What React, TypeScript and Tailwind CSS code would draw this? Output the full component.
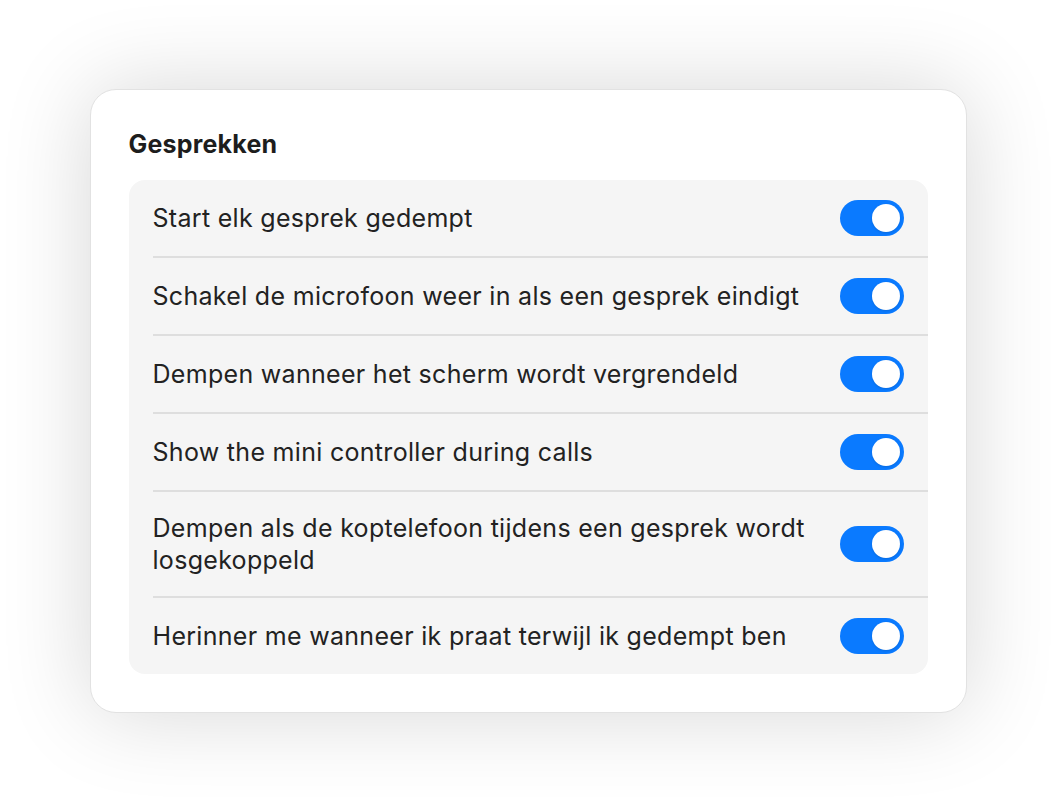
const items = [
  "Start elk gesprek gedempt",
  "Schakel de microfoon weer in als een gesprek eindigt",
  "Dempen wanneer het scherm wordt vergrendeld",
  "Show the mini controller during calls",
  "Dempen als de koptelefoon tijdens een gesprek wordt losgekoppeld",
  "Herinner me wanneer ik praat terwijl ik gedempt ben",
];

function Toggle() {
  return (
    <div className="flex h-9 w-16 shrink-0 items-center justify-end rounded-full bg-[#0a7aff] pr-1">
      <div className="h-7 w-7 rounded-full bg-white shadow-sm" />
    </div>
  );
}

export default function App() {
  return (
    <div className="flex h-[802px] w-[1056px] items-start justify-center bg-white pt-[89px] font-['Inter',sans-serif] text-[#222]">
      <div className="w-[877px] rounded-[26px] border border-[#e2e2e2] bg-white px-[38px] pb-[38px] pt-[38px] shadow-[0_0_90px_rgba(0,0,0,0.16)]">
        <h2 className="mb-[20px] text-[25px] font-bold leading-[32px] tracking-[0.2px] text-[#1d1d1d]">Gesprekken</h2>
        <div className="rounded-[16px] bg-[#f5f5f5]">
          {items.map((t, i) => (
            <div key={t} className="pl-6">
              <div
                className={
                  "flex items-center gap-6 py-[20px] pr-6 " +
                  (i < items.length - 1 ? "border-b-2 border-[#dedede]" : "")
                }
              >
                <span className="flex-1 text-[25px] leading-[32px] tracking-[0.3px] text-[#222]">{t}</span>
                <Toggle />
              </div>
            </div>
          ))}
        </div>
      </div>
    </div>
  );
}
